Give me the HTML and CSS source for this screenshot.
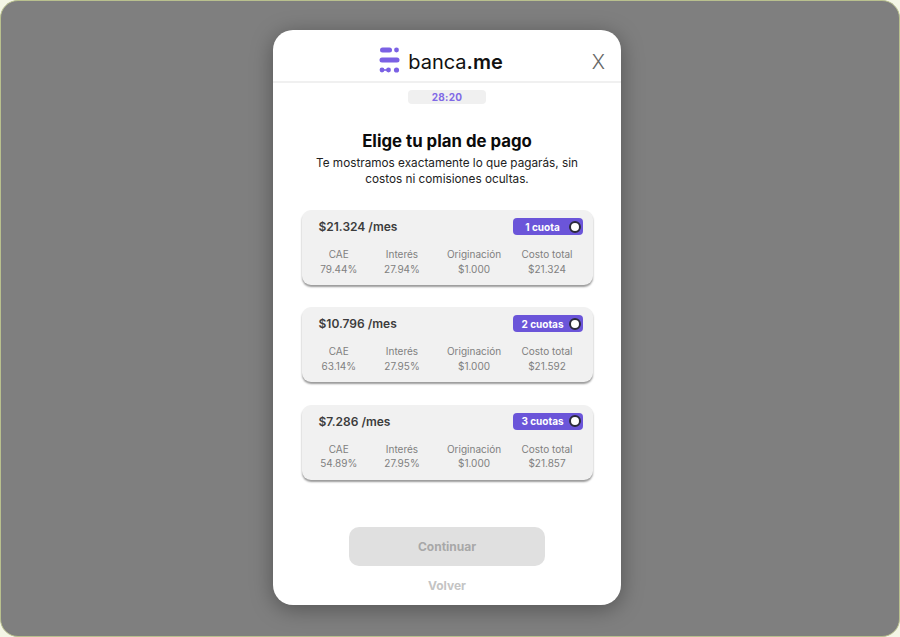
FILE: index.html
```html
<!DOCTYPE html>
<html lang="es">
<head>
<meta charset="utf-8">
<title>banca.me</title>
<link rel="stylesheet" href="styles.css">
</head>
<body>
<div class="frame">
  <main class="modal">
    <header class="header">
      <div class="brand">
        <svg class="logo" width="21" height="26" viewBox="0 0 21 26" aria-hidden="true">
          <rect x="1" y="0.5" width="12" height="5" rx="2.5" fill="#7b61e4"/>
          <circle cx="17.5" cy="3" r="2.4" fill="#7b61e4"/>
          <rect x="0.5" y="10.5" width="20" height="5" rx="2.5" fill="#7b61e4"/>
          <circle cx="3" cy="23" r="2.4" fill="#7b61e4"/>
          <rect x="3" y="22.2" width="6" height="1.6" fill="#7b61e4"/>
          <circle cx="9.5" cy="23" r="2.4" fill="#7b61e4"/>
          <circle cx="17.5" cy="23" r="2.6" fill="#7b61e4"/>
        </svg>
        <span class="wordmark">banca<b>.me</b></span>
      </div>
      <button class="close" type="button">X</button>
    </header>
    <div class="timer">28:20</div>
    <section class="intro">
      <h1>Elige tu plan de pago</h1>
      <p>Te mostramos exactamente lo que pagarás, sin<br>costos ni comisiones ocultas.</p>
    </section>
    <section class="plans">
      <article class="card">
        <div class="card-top">
          <span class="price">$21.324 /mes</span>
          <span class="badge"><span class="badge-label">1 cuota</span><i class="dot"></i></span>
        </div>
        <dl class="stats">
          <div><dt>CAE</dt><dd>79.44%</dd></div>
          <div><dt>Interés</dt><dd>27.94%</dd></div>
          <div><dt>Originación</dt><dd>$1.000</dd></div>
          <div><dt>Costo total</dt><dd>$21.324</dd></div>
        </dl>
      </article>
      <article class="card">
        <div class="card-top">
          <span class="price">$10.796 /mes</span>
          <span class="badge"><span class="badge-label">2 cuotas</span><i class="dot"></i></span>
        </div>
        <dl class="stats">
          <div><dt>CAE</dt><dd>63.14%</dd></div>
          <div><dt>Interés</dt><dd>27.95%</dd></div>
          <div><dt>Originación</dt><dd>$1.000</dd></div>
          <div><dt>Costo total</dt><dd>$21.592</dd></div>
        </dl>
      </article>
      <article class="card">
        <div class="card-top">
          <span class="price">$7.286 /mes</span>
          <span class="badge"><span class="badge-label">3 cuotas</span><i class="dot"></i></span>
        </div>
        <dl class="stats">
          <div><dt>CAE</dt><dd>54.89%</dd></div>
          <div><dt>Interés</dt><dd>27.95%</dd></div>
          <div><dt>Originación</dt><dd>$1.000</dd></div>
          <div><dt>Costo total</dt><dd>$21.857</dd></div>
        </dl>
      </article>
    </section>
    <button class="continue" type="button">Continuar</button>
    <a class="back">Volver</a>
  </main>
</div>
</body>
</html>
```
FILE: styles.css
```css
* { box-sizing: border-box; }
html, body { margin: 0; height: 100%; background: #f4f6e6; }
body { font-family: Inter, "Liberation Sans", sans-serif; overflow: hidden; }
.frame {
  width: 900px;
  height: 637px;
  background: #7f7f7f;
  border: 1px solid #b9c08e;
  border-radius: 18px;
  display: flex;
  justify-content: center;
  padding: 29px 6px 0 0;
}
.modal {
  width: 348px;
  height: 575px;
  background: #fff;
  border-radius: 20px;
  box-shadow: 0 4px 22px rgba(0, 0, 0, 0.35);
  display: flex;
  flex-direction: column;
  align-items: center;
}
.header {
  width: 100%;
  height: 53px;
  flex: none;
  border-bottom: 2px solid #f0f0f0;
  display: flex;
  justify-content: center;
  align-items: center;
  position: relative;
  padding-top: 9px;
}
.brand { display: flex; align-items: center; gap: 8px; margin-right: 12px; }
.logo { display: block; }
.wordmark { font-family: Inter, sans-serif; font-size: 20px; font-weight: 400; color: #111; padding-top: 3px; }
.wordmark b { font-weight: 600; }
.close {
  position: absolute;
  right: 16px;
  top: 20px;
  padding: 0;
  border: 0;
  background: none;
  font: 300 20px/24px Inter, sans-serif;
  color: #666;
}
.timer {
  width: 78px;
  height: 14px;
  margin-top: 7px;
  background: #f0f0f0;
  border-radius: 4px;
  color: #8069e6;
  font-size: 10px;
  font-weight: 700;
  line-height: 14px;
  text-align: center;
  letter-spacing: 0.3px;
}
.intro { margin-top: 27px; text-align: center; }
.intro h1 { margin: 0; font-size: 16.8px; line-height: 20px; font-weight: 700; color: #0b0b0b; }
.intro p { margin: 5px 0 0; font-size: 11.75px; line-height: 15.5px; color: #222; }
.plans { margin-top: 23px; width: 291px; display: flex; flex-direction: column; gap: 22.3px; }
.card {
  height: 75px;
  background: #f1f1f1;
  border-radius: 9px;
  box-shadow: 0 2px 2px rgba(0, 0, 0, 0.4);
  padding: 8px 10px 0 17px;
}
.card-top { display: flex; justify-content: space-between; align-items: center; height: 17px; }
.price { font-size: 12px; font-weight: 600; color: #3c3c3c; }
.badge {
  width: 70px;
  height: 17px;
  background: #6b55d9;
  border-radius: 4px;
  color: #fff;
  font-size: 10px;
  font-weight: 700;
  display: flex;
  align-items: center;
  padding: 0 2px 0 6px;
}
.badge-label { flex: 1; text-align: center; padding-right: 2px; white-space: nowrap; }
.dot {
  width: 12px;
  height: 12px;
  border-radius: 50%;
  background: #fff;
  border: 2px solid #2b2b3a;
  flex: none;
}
.stats {
  margin: 12px 0 0 -17px;
  width: 291px;
  display: grid;
  grid-template-columns: 74.5px 52px 92px 54px;
  font-size: 10px;
  line-height: 14.5px;
  color: #808080;
  text-align: center;
}
.stats dt, .stats dd { margin: 0; white-space: nowrap; }
.continue {
  margin-top: 47px;
  width: 196px;
  height: 39px;
  flex: none;
  border: 0;
  border-radius: 10px;
  background: #e0e0e0;
  color: #a8a8a8;
  font: 700 12px Inter, sans-serif;
}
.back { margin-top: 12px; font-size: 12px; font-weight: 700; line-height: 16px; color: #c4c4c4; }
```
